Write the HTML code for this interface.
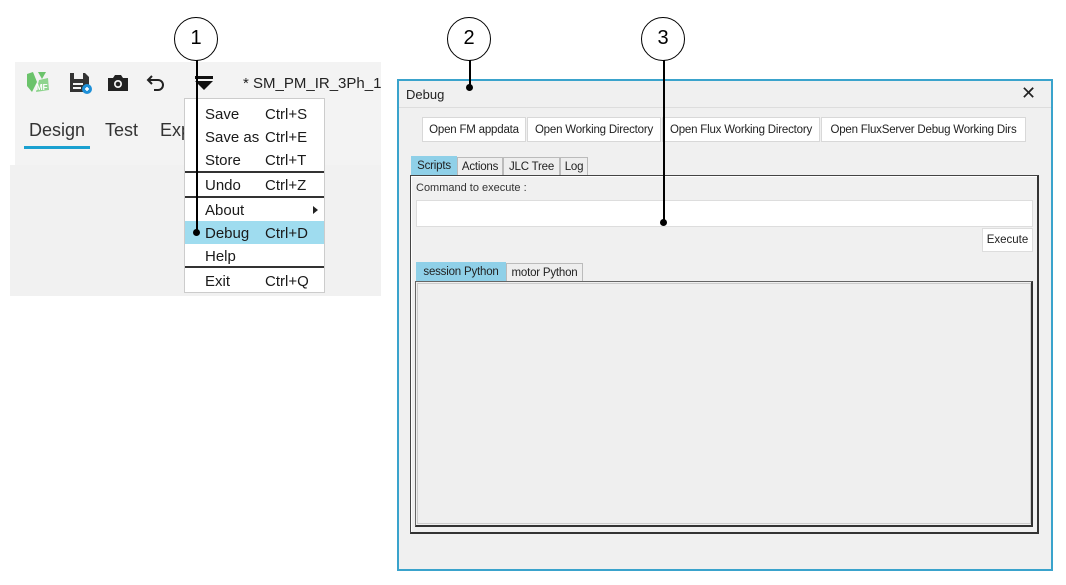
<!DOCTYPE html>
<html><head><meta charset="utf-8"><style>
*{margin:0;padding:0;box-sizing:border-box}
body{width:1066px;height:585px;background:#fff;position:relative;overflow:hidden;font-family:"Liberation Sans",sans-serif;color:#222}
.a{position:absolute}
.mi{position:absolute;left:205px;font-size:15px;color:#1a1a1a}
.sc{position:absolute;left:265px;font-size:15px;color:#1a1a1a}
.sep{position:absolute;left:185px;width:139px;height:2px;background:#333}
.btn{position:absolute;top:117px;height:25px;background:#fff;border:1px solid #d8d8d8;font-size:11.5px;letter-spacing:-0.2px;line-height:24px;text-align:center;color:#222;white-space:nowrap}
.tab{position:absolute;height:19px;border:1px solid #bbb;border-bottom:none;font-size:11.5px;letter-spacing:-0.2px;line-height:19px;text-align:center;background:#eee;color:#222}
.circ{position:absolute;width:44px;height:44px;border:1.5px solid #000;border-radius:50%;background:#fff;font-size:20px;line-height:41px;text-align:center;color:#000}
</style></head><body>
<div class="a" style="left:15px;top:62px;width:366px;height:104px;background:#f3f3f3"></div>
<div class="a" style="left:10px;top:165px;width:371px;height:131px;background:#f1f1f1"></div>
<svg class="a" style="left:24px;top:70px" width="28" height="26" viewBox="0 0 28 26">
<path d="M3 4 L9 2 L13 12 L8 22 L3 16Z" fill="#6bc36b"/><path d="M14 2 L22 2 L18 9Z" fill="#6bc36b"/><path d="M15 10 L24 8 L25 20 L12 22Z" fill="#8dd48d"/>
<text x="12" y="20" font-size="8" font-weight="bold" fill="#fff" font-family="Liberation Sans">MF</text></svg>
<svg class="a" style="left:68px;top:71px" width="26" height="24" viewBox="0 0 26 24">
<path d="M2 2 H17 L21 6 V21 H2Z" fill="#333"/><rect x="6" y="2" width="9" height="6" fill="#f3f3f3"/><rect x="5" y="12" width="10" height="2" fill="#f3f3f3"/><rect x="5" y="16" width="8" height="2" fill="#f3f3f3"/>
<circle cx="19" cy="18" r="5" fill="#1e90d8"/><path d="M17 18h4M19 16v4" stroke="#fff" stroke-width="1.5"/></svg>
<svg class="a" style="left:106px;top:73px" width="24" height="20" viewBox="0 0 24 20">
<path d="M2 5 H7 L9 2 H15 L17 5 H22 V18 H2Z" fill="#222"/><circle cx="12" cy="11" r="4" fill="#f3f3f3"/><circle cx="12" cy="11" r="2.3" fill="#222"/></svg>
<svg class="a" style="left:144px;top:71px" width="24" height="24" viewBox="0 0 24 24">
<path d="M8 5 L4 9 L8 13 M4 9 H14 A5 5 0 0 1 14 19 H10" fill="none" stroke="#222" stroke-width="2"/></svg>
<svg class="a" style="left:193px;top:75px" width="22" height="16" viewBox="0 0 22 16">
<rect x="2" y="1" width="18" height="3" fill="#111"/><path d="M2 6 H20 L11 15Z" fill="#111"/></svg>
<div class="a" style="left:243px;top:75px;font-size:15px;color:#222">* SM_PM_IR_3Ph_1</div>
<div class="a" style="left:29px;top:120px;font-size:18px;color:#333">Design</div>
<div class="a" style="left:105px;top:120px;font-size:18px;color:#333">Test</div>
<div class="a" style="left:160px;top:120px;font-size:18px;color:#333">Exp</div>
<div class="a" style="left:24px;top:146px;width:66px;height:3px;background:#1aa0d0"></div>
<div class="a" style="left:184px;top:98px;width:141px;height:195px;background:#fff;border:1px solid #ccc"></div>
<div class="a" style="left:185px;top:221px;width:139px;height:23px;background:#9fdcef"></div>
<div class="mi" style="top:106px">Save</div><div class="sc" style="top:106px">Ctrl+S</div>
<div class="mi" style="top:129px">Save as</div><div class="sc" style="top:129px">Ctrl+E</div>
<div class="mi" style="top:152px">Store</div><div class="sc" style="top:152px">Ctrl+T</div>
<div class="sep" style="top:171px"></div>
<div class="mi" style="top:177px">Undo</div><div class="sc" style="top:177px">Ctrl+Z</div>
<div class="sep" style="top:196px"></div>
<div class="mi" style="top:202px">About</div><div class="a" style="left:313px;top:206px;width:0;height:0;border-left:5px solid #222;border-top:4px solid transparent;border-bottom:4px solid transparent"></div>
<div class="mi" style="top:225px">Debug</div><div class="sc" style="top:225px">Ctrl+D</div>
<div class="mi" style="top:248px">Help</div>
<div class="sep" style="top:266px"></div>
<div class="mi" style="top:273px">Exit</div><div class="sc" style="top:273px">Ctrl+Q</div>
<div class="a" style="left:397px;top:79px;width:656px;height:492px;background:#f0f0f0;border:2px solid #3aa3cc"></div>
<div class="a" style="left:406px;top:87px;font-size:13px;color:#222">Debug</div>
<div class="a" style="left:1021px;top:83px;font-size:18px;color:#222">✕</div>
<div class="a" style="left:399px;top:107px;width:652px;height:1px;background:#ddd"></div>
<div class="btn" style="left:422px;width:104px">Open FM appdata</div>
<div class="btn" style="left:527px;width:134px">Open Working Directory</div>
<div class="btn" style="left:662px;width:158px">Open Flux Working Directory</div>
<div class="btn" style="left:821px;width:205px">Open FluxServer Debug Working Dirs</div>
<div class="tab" style="left:411px;top:156px;width:46px;background:#8fd0e8;border-color:#8fd0e8">Scripts</div>
<div class="tab" style="left:457px;top:157px;width:46px">Actions</div>
<div class="tab" style="left:503px;top:157px;width:57px">JLC Tree</div>
<div class="tab" style="left:560px;top:157px;width:28px">Log</div>
<div class="a" style="left:410px;top:175px;width:629px;height:359px;border:1px solid #444;border-right:2px solid #333;border-bottom:2px solid #333;box-shadow:inset 1px 1px 0 #fff"></div>
<div class="a" style="left:416px;top:182px;font-size:11px;color:#333">Command to execute :</div>
<div class="a" style="left:416px;top:200px;width:617px;height:27px;background:#fff;border:1px solid #ddd"></div>
<div class="a" style="left:982px;top:228px;width:51px;height:24px;background:#fff;border:1px solid #ddd;font-size:11.5px;line-height:23px;text-align:center">Execute</div>
<div class="tab" style="left:416px;top:262px;width:90px;background:#8fd0e8;border-color:#8fd0e8">session Python</div>
<div class="tab" style="left:506px;top:263px;width:77px">motor Python</div>
<div class="a" style="left:415px;top:281px;width:618px;height:246px;border:1px solid #666;border-right:2px solid #333;border-bottom:2px solid #333"></div>
<div class="a" style="left:417px;top:283px;width:614px;height:241px;border:1px solid #ccc;background:#efefef"></div>
<div class="a" style="left:196px;top:60px;width:1.5px;height:172px;background:#000"></div>
<div class="a" style="left:193px;top:229px;width:7px;height:7px;border-radius:50%;background:#000"></div>
<div class="a" style="left:469px;top:60px;width:1.5px;height:27px;background:#000"></div>
<div class="a" style="left:466px;top:84px;width:7px;height:7px;border-radius:50%;background:#000"></div>
<div class="a" style="left:663px;top:60px;width:1.5px;height:162px;background:#000"></div>
<div class="a" style="left:660px;top:219px;width:7px;height:7px;border-radius:50%;background:#000"></div>
<div class="circ" style="left:174px;top:17px">1</div>
<div class="circ" style="left:447px;top:17px">2</div>
<div class="circ" style="left:641px;top:17px">3</div>
</body></html>
